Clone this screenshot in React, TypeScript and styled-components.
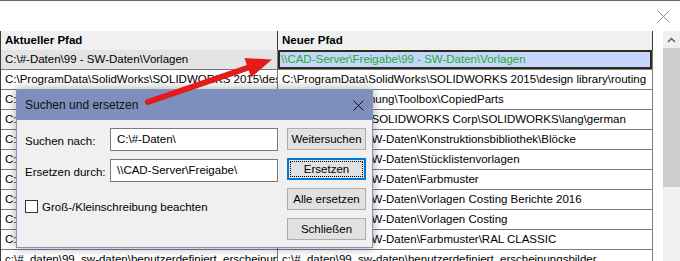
import React from "react";
import styled, { createGlobalStyle } from "styled-components";

const Global = createGlobalStyle`
  html, body {
    margin: 0;
    padding: 0;
    background: #ffffff;
  }
  * {
    box-sizing: border-box;
  }
`;

const Window = styled.div`
  position: relative;
  width: 680px;
  height: 261px;
  overflow: hidden;
  background: #ffffff;
  border-top: 1px solid #6b6b6b;
  font-family: "Liberation Sans", Arial, sans-serif;
  font-size: 11.5px;
  color: #000;
`;

const TopBar = styled.div`
  height: 30px;
  display: flex;
  justify-content: flex-end;
  align-items: flex-start;
  padding: 9px 10px 0 0;
`;

const Main = styled.div`
  display: flex;
  align-items: flex-start;
`;

const Grid = styled.div`
  display: grid;
  grid-template-columns: 277px 375px;
  border-left: 1px solid #3c3c3c;
  width: 653px;
`;

const HeadCell = styled.div`
  height: 19px;
  line-height: 19px;
  padding-left: 4px;
  background: #f0f0f0;
  border-right: 1px solid #3c3c3c;
  font-weight: 700;
  white-space: nowrap;
  overflow: hidden;
`;

const Cell = styled.div<{ $shade?: boolean; $current?: boolean }>`
  height: 20px;
  line-height: 19px;
  padding-left: ${(p) => (p.$current ? "3px" : "4px")};
  border-right: 1px solid #7a7a7a;
  border-bottom: 1px solid #7a7a7a;
  white-space: nowrap;
  overflow: hidden;
  background: ${(p) => (p.$current ? "#c6d5fb" : p.$shade ? "#e3e3e3" : "#ffffff")};
  color: ${(p) => (p.$current ? "#22b02a" : "#000")};
  box-shadow: ${(p) => (p.$current ? "inset 0 0 0 2px #2f2a1b" : "none")};
`;

const Gap = styled.div`
  width: 10px;
`;

const ScrollBar = styled.div`
  width: 17px;
  height: 230px;
  background: #f0f0f0;
  display: flex;
  flex-direction: column;
`;

const ScrollButton = styled.div`
  height: 17px;
  display: flex;
  align-items: center;
  justify-content: center;
`;

const Thumb = styled.div`
  height: 139px;
  background: #cdcdcd;
`;

const Dialog = styled.div`
  position: absolute;
  left: 16px;
  top: 88px;
  width: 357px;
  height: 159px;
  background: #f0f0f0;
  border: 1px solid #8592bb;
  box-shadow: 0 0 10px rgba(0, 0, 0, 0.35);
  display: flex;
  flex-direction: column;
`;

const TitleBar = styled.div`
  height: 30px;
  background: #7f8fbd;
  display: flex;
  align-items: center;
  justify-content: space-between;
  padding: 0 8px 0 8px;
  font-size: 12px;
  color: #111;
`;

const DialogBody = styled.div`
  display: flex;
  justify-content: space-between;
  padding: 8px 6px 0 8px;
`;

const Fields = styled.div`
  display: flex;
  flex-direction: column;
  gap: 8px;
`;

const FieldRow = styled.div`
  display: flex;
  align-items: center;
  height: 23px;
`;

const Label = styled.div`
  width: 85px;
  padding-top: 3px;
  white-space: nowrap;
`;

const Input = styled.div`
  width: 168px;
  height: 23px;
  background: #ffffff;
  border: 1px solid #7a7a7a;
  padding-left: 6px;
  line-height: 20px;
  white-space: nowrap;
`;

const CheckRow = styled.div`
  display: flex;
  align-items: center;
  gap: 4px;
  margin-top: 10px;
`;

const Box = styled.div`
  width: 13px;
  height: 13px;
  background: #ffffff;
  border: 1px solid #333;
`;

const Buttons = styled.div`
  display: flex;
  flex-direction: column;
  gap: 8px;
`;

const Button = styled.div<{ $focused?: boolean }>`
  width: 79px;
  height: 22px;
  background: #e1e1e1;
  border: ${(p) => (p.$focused ? "2px solid #0078d7" : "1px solid #adadad")};
  display: flex;
  align-items: center;
  justify-content: center;
  white-space: nowrap;
  position: relative;
  &::after {
    content: "";
    display: ${(p) => (p.$focused ? "block" : "none")};
    position: absolute;
    inset: 1px;
    border: 1px dotted #000;
  }
`;

const Overlay = styled.svg`
  position: absolute;
  left: 0;
  top: 0;
  pointer-events: none;
`;

const rows: [string, string][] = [
  ["C:\\#-Daten\\99 - SW-Daten\\Vorlagen", "\\\\CAD-Server\\Freigabe\\99 - SW-Daten\\Vorlagen"],
  [
    "C:\\ProgramData\\SolidWorks\\SOLIDWORKS 2015\\design library\\routing",
    "C:\\ProgramData\\SolidWorks\\SOLIDWORKS 2015\\design library\\routing",
  ],
  ["C:\\#-Daten\\Zeichnung\\Toolbox\\CopiedParts", "C:\\#-Daten\\Zeichnung\\Toolbox\\CopiedParts"],
  [
    "C:\\Program Files\\SOLIDWORKS Corp\\SOLIDWORKS\\lang\\german",
    "C:\\Program Files\\SOLIDWORKS Corp\\SOLIDWORKS\\lang\\german",
  ],
  [
    "C:\\#-Daten\\99 - SW-Daten\\Konstruktionsbibliothek\\Blöcke",
    "C:\\#-Daten\\99 - SW-Daten\\Konstruktionsbibliothek\\Blöcke",
  ],
  ["C:\\#-Daten\\99 - SW-Daten\\Stücklistenvorlagen", "C:\\#-Daten\\99 - SW-Daten\\Stücklistenvorlagen"],
  ["C:\\#-Daten\\99 - SW-Daten\\Farbmuster", "C:\\#-Daten\\99 - SW-Daten\\Farbmuster"],
  [
    "C:\\#-Daten\\99 - SW-Daten\\Vorlagen Costing Berichte 2016",
    "C:\\#-Daten\\99 - SW-Daten\\Vorlagen Costing Berichte 2016",
  ],
  ["C:\\#-Daten\\99 - SW-Daten\\Vorlagen Costing", "C:\\#-Daten\\99 - SW-Daten\\Vorlagen Costing"],
  ["C:\\#-Daten\\99 - SW-Daten\\Farbmuster\\RAL CLASSIC", "C:\\#-Daten\\99 - SW-Daten\\Farbmuster\\RAL CLASSIC"],
  [
    "c:\\#_daten\\99_sw-daten\\benutzerdefiniert_erscheinungsbilder",
    "c:\\#_daten\\99_sw-daten\\benutzerdefiniert_erscheinungsbilder",
  ],
];

const App = () => {
  return (
    <>
      <Global />
      <Window>
        <TopBar>
          <svg width="13" height="13" viewBox="0 0 13 13">
            <path d="M0.5 0.5 L12.5 12.5 M12.5 0.5 L0.5 12.5" stroke="#8a8a8a" strokeWidth="1" />
          </svg>
        </TopBar>
        <Main>
          <Grid>
            <HeadCell>Aktueller Pfad</HeadCell>
            <HeadCell>Neuer Pfad</HeadCell>
            {rows.map(([oldPath, newPath], idx) => (
              <React.Fragment key={idx}>
                <Cell $shade={idx === 0}>{oldPath}</Cell>
                <Cell $current={idx === 0}>{newPath}</Cell>
              </React.Fragment>
            ))}
          </Grid>
          <Gap />
          <ScrollBar>
            <ScrollButton>
              <svg width="9" height="6" viewBox="0 0 9 6">
                <path d="M1 5 L4.5 1.5 L8 5" stroke="#606060" strokeWidth="1.5" fill="none" />
              </svg>
            </ScrollButton>
            <Thumb />
          </ScrollBar>
        </Main>

        <Dialog>
          <TitleBar>
            <span>Suchen und ersetzen</span>
            <svg width="11" height="11" viewBox="0 0 11 11">
              <path d="M0.5 0.5 L10.5 10.5 M10.5 0.5 L0.5 10.5" stroke="#111" strokeWidth="1" />
            </svg>
          </TitleBar>
          <DialogBody>
            <Fields>
              <FieldRow>
                <Label>Suchen nach:</Label>
                <Input>C:\#-Daten\</Input>
              </FieldRow>
              <FieldRow>
                <Label>Ersetzen durch:</Label>
                <Input>\\CAD-Server\Freigabe\</Input>
              </FieldRow>
              <CheckRow>
                <Box />
                <span>Groß-/Kleinschreibung beachten</span>
              </CheckRow>
            </Fields>
            <Buttons>
              <Button>Weitersuchen</Button>
              <Button $focused>Ersetzen</Button>
              <Button>Alle ersetzen</Button>
              <Button>Schließen</Button>
            </Buttons>
          </DialogBody>
        </Dialog>

        <Overlay width="680" height="261" viewBox="0 0 680 261">
          <line x1="148" y1="101" x2="250" y2="66" stroke="#e41b1b" strokeWidth="6" strokeLinecap="round" />
          <polygon points="272,58.5 244.5,57 251,76.5" fill="#e41b1b" />
        </Overlay>
      </Window>
    </>
  );
};

export default App;
